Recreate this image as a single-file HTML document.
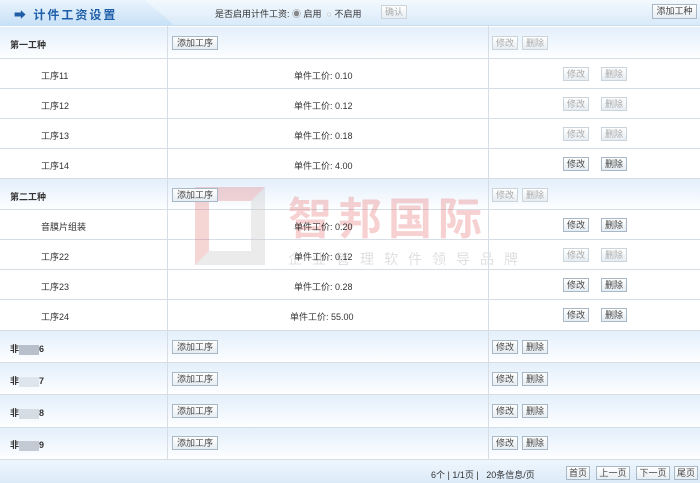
<!DOCTYPE html>
<html><head><meta charset="utf-8"><style>
*{margin:0;padding:0;box-sizing:border-box}
body{width:700px;height:483px;overflow:hidden;background:#fff;font-family:"Liberation Sans","Noto Sans CJK SC",sans-serif;font-size:9px;color:#333;position:relative}
.hdr{position:absolute;left:0;top:0;width:700px;height:26px;background:linear-gradient(#f3f9fe,#d9eaf9);border-bottom:1px solid #c9dbea}
.tab{position:absolute;left:0;top:0;width:180px;height:26px;background:linear-gradient(#eaf4fd,#c7e0f6);clip-path:polygon(0 0,145px 0,175px 26px,0 26px)}
.title{position:absolute;left:14px;top:6px;font-size:12px;font-weight:bold;color:#1f5fa8;letter-spacing:2px}
.row{position:absolute;left:0;width:700px;border-bottom:1px solid #d6dde5}
.g{background:linear-gradient(#e3effb,#fdfeff)}
.vl{position:absolute;top:26px;width:1px;height:434px;background:#d6dde5}
.t{position:absolute;white-space:nowrap}
.btn{position:absolute;height:14px;border:1px solid #a9b8c7;background:linear-gradient(#fff,#e6edf3);font-size:9px;line-height:12px;text-align:center;color:#444}
.dis{color:#aaa;border-color:#cbd3db}
.foot{position:absolute;left:0;top:460px;width:700px;height:23px;background:linear-gradient(#eef6fd,#dceaf8)}
.wm{position:absolute;color:rgba(225,90,90,.28);font-size:44px;font-weight:bold;letter-spacing:6px}
</style></head><body>
<div class="hdr"><div class="tab"></div>
<div class="title">➡ 计件工资设置</div>
<div class="t" style="left:215px;top:7px">是否启用计件工资: <span style="color:#888">◉</span> 启用 &nbsp;<span style="color:#bbb">○</span> 不启用</div>
<div class="btn dis" style="left:381px;top:5px;width:26px">确认</div>
<div class="btn" style="left:652px;top:4px;width:45px;height:15px">添加工种</div>
</div>

<div class="row g" style="top:27px;height:32px"></div>
<div class="row" style="top:59px;height:30px"></div>
<div class="row" style="top:89px;height:30px"></div>
<div class="row" style="top:119px;height:30px"></div>
<div class="row" style="top:149px;height:30px"></div>
<div class="row g" style="top:179px;height:31px"></div>
<div class="row" style="top:210px;height:30px"></div>
<div class="row" style="top:240px;height:30px"></div>
<div class="row" style="top:270px;height:30px"></div>
<div class="row" style="top:300px;height:31px"></div>
<div class="row g" style="top:331px;height:32px"></div>
<div class="row g" style="top:363px;height:32px"></div>
<div class="row g" style="top:395px;height:33px"></div>
<div class="row g" style="top:428px;height:32px"></div>
<div class="foot"></div>

<div style="position:absolute;left:195px;top:187px;width:70px;height:78px;border:14px solid rgba(220,90,90,.25);border-right-color:rgba(200,200,200,.35);border-bottom-color:rgba(200,200,200,.35)"></div>
<div class="wm" style="left:288px;top:183px">智邦国际</div>
<div class="t" style="left:288px;top:249px;font-size:14px;color:rgba(150,150,150,.3);letter-spacing:10px">企业管理软件领导品牌</div>

<div class="vl" style="left:167px"></div>
<div class="vl" style="left:488px"></div>

<div class="t" style="left:10px;top:38px;font-weight:bold">第一工种</div>
<div class="btn" style="left:172px;top:36px;width:46px">添加工序</div>
<div class="btn dis" style="left:492px;top:36px;width:26px">修改</div>
<div class="btn dis" style="left:522px;top:36px;width:26px">删除</div>

<div class="t" style="left:41px;top:69px">工序11</div><div class="t" style="left:294px;top:69px">单件工价: 0.10</div>
<div class="btn dis" style="left:563px;top:67px;width:26px">修改</div><div class="btn dis" style="left:601px;top:67px;width:26px">删除</div>
<div class="t" style="left:41px;top:99px">工序12</div><div class="t" style="left:294px;top:99px">单件工价: 0.12</div>
<div class="btn dis" style="left:563px;top:97px;width:26px">修改</div><div class="btn dis" style="left:601px;top:97px;width:26px">删除</div>
<div class="t" style="left:41px;top:129px">工序13</div><div class="t" style="left:294px;top:129px">单件工价: 0.18</div>
<div class="btn dis" style="left:563px;top:127px;width:26px">修改</div><div class="btn dis" style="left:601px;top:127px;width:26px">删除</div>
<div class="t" style="left:41px;top:159px">工序14</div><div class="t" style="left:294px;top:159px">单件工价: 4.00</div>
<div class="btn" style="left:563px;top:157px;width:26px">修改</div><div class="btn" style="left:601px;top:157px;width:26px">删除</div>

<div class="t" style="left:10px;top:190px;font-weight:bold">第二工种</div>
<div class="btn" style="left:172px;top:188px;width:46px">添加工序</div>
<div class="btn dis" style="left:492px;top:188px;width:26px">修改</div>
<div class="btn dis" style="left:522px;top:188px;width:26px">删除</div>

<div class="t" style="left:41px;top:220px">音膜片组装</div><div class="t" style="left:294px;top:220px">单件工价: 0.20</div>
<div class="btn" style="left:563px;top:218px;width:26px">修改</div><div class="btn" style="left:601px;top:218px;width:26px">删除</div>
<div class="t" style="left:41px;top:250px">工序22</div><div class="t" style="left:294px;top:250px">单件工价: 0.12</div>
<div class="btn dis" style="left:563px;top:248px;width:26px">修改</div><div class="btn dis" style="left:601px;top:248px;width:26px">删除</div>
<div class="t" style="left:41px;top:280px">工序23</div><div class="t" style="left:294px;top:280px">单件工价: 0.28</div>
<div class="btn" style="left:563px;top:278px;width:26px">修改</div><div class="btn" style="left:601px;top:278px;width:26px">删除</div>
<div class="t" style="left:41px;top:310px">工序24</div><div class="t" style="left:290px;top:310px">单件工价: 55.00</div>
<div class="btn" style="left:563px;top:308px;width:26px">修改</div><div class="btn" style="left:601px;top:308px;width:26px">删除</div>

<div class="t" style="left:10px;top:342px;font-weight:bold">非<span style="display:inline-block;width:20px;height:10px;background:#b8c0cc;vertical-align:middle"></span>6</div>
<div class="btn" style="left:172px;top:340px;width:46px">添加工序</div>
<div class="btn" style="left:492px;top:340px;width:26px">修改</div><div class="btn" style="left:522px;top:340px;width:26px">删除</div>
<div class="t" style="left:10px;top:374px;font-weight:bold">非<span style="display:inline-block;width:20px;height:10px;background:#dfe5ec;vertical-align:middle"></span>7</div>
<div class="btn" style="left:172px;top:372px;width:46px">添加工序</div>
<div class="btn" style="left:492px;top:372px;width:26px">修改</div><div class="btn" style="left:522px;top:372px;width:26px">删除</div>
<div class="t" style="left:10px;top:406px;font-weight:bold">非<span style="display:inline-block;width:20px;height:10px;background:#d5dce4;vertical-align:middle"></span>8</div>
<div class="btn" style="left:172px;top:404px;width:46px">添加工序</div>
<div class="btn" style="left:492px;top:404px;width:26px">修改</div><div class="btn" style="left:522px;top:404px;width:26px">删除</div>
<div class="t" style="left:10px;top:438px;font-weight:bold">非<span style="display:inline-block;width:20px;height:10px;background:#c3cad4;vertical-align:middle"></span>9</div>
<div class="btn" style="left:172px;top:436px;width:46px">添加工序</div>
<div class="btn" style="left:492px;top:436px;width:26px">修改</div><div class="btn" style="left:522px;top:436px;width:26px">删除</div>

<div class="t" style="left:431px;top:468px">6个 | 1/1页 | &nbsp; 20条信息/页</div>
<div class="btn" style="left:566px;top:466px;width:24px">首页</div>
<div class="btn" style="left:596px;top:466px;width:34px">上一页</div>
<div class="btn" style="left:636px;top:466px;width:34px">下一页</div>
<div class="btn" style="left:674px;top:466px;width:24px">尾页</div>
</body></html>
